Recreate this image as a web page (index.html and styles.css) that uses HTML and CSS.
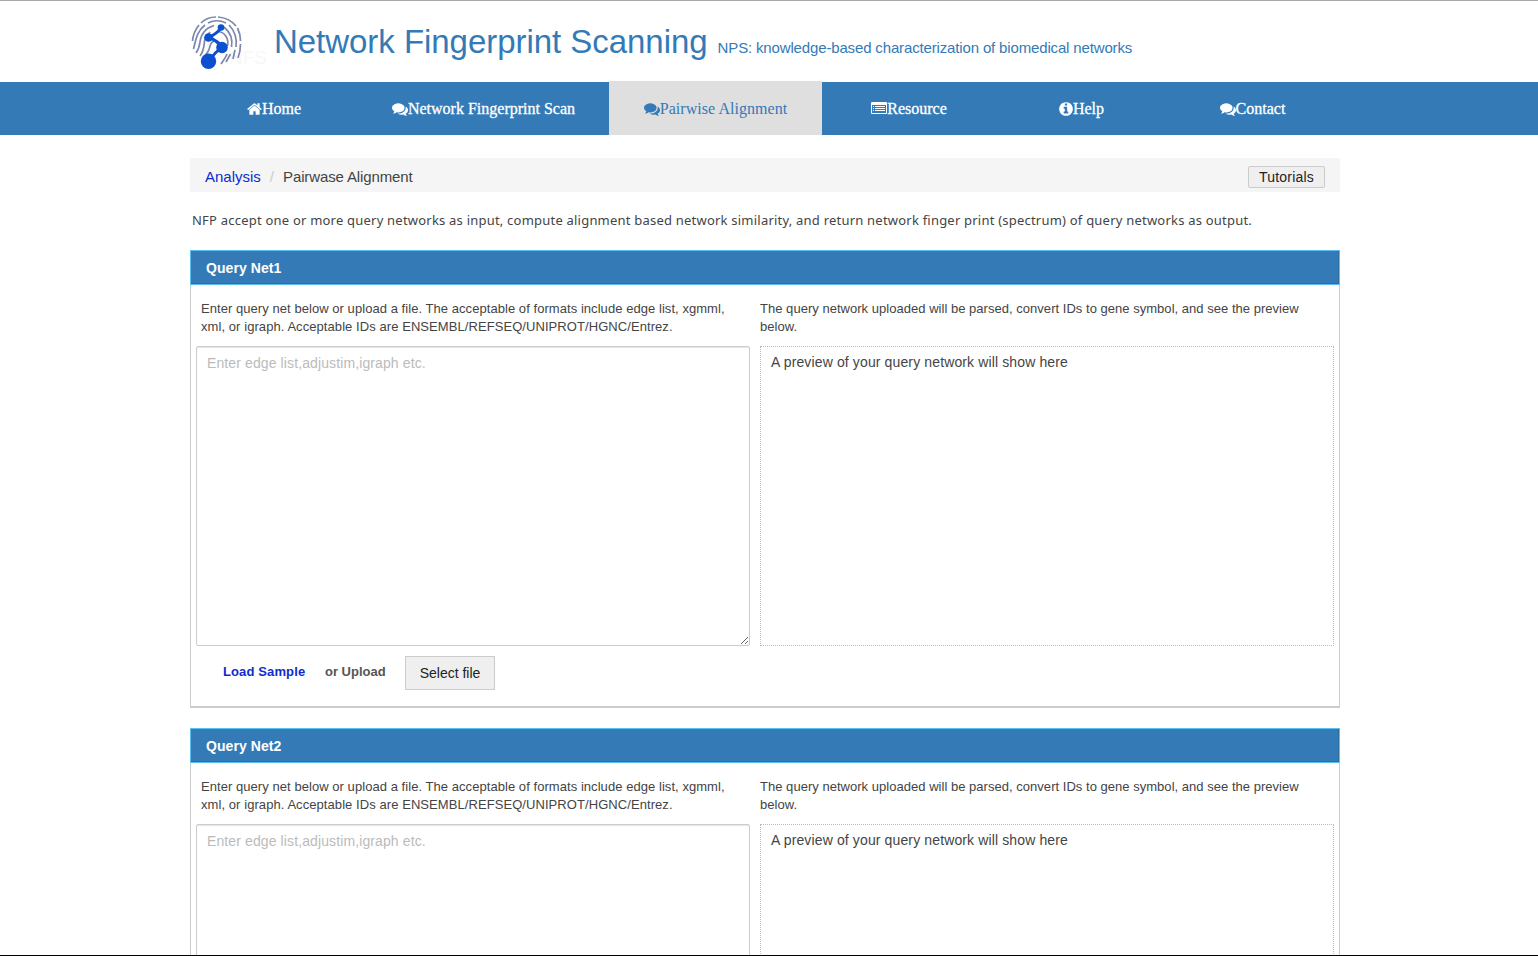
FILE: index.html
```html
<!DOCTYPE html>
<html lang="en">
<head>
<meta charset="utf-8">
<title>Network Fingerprint Scanning</title>
<link rel="stylesheet" href="styles.css">
</head>
<body>
<svg class="sprite" width="0" height="0">
  <symbol id="comments" viewBox="0 0 1792 1792"><path d="M1408 768q0 139-94 257t-256.5 186.5-353.5 68.5q-86 0-176-16-124 88-278 128-36 9-86 16h-3q-11 0-20.5-8t-11.5-21q-1-3-1-6.5t.5-6.5 2-6l2.5-5 3.5-5.5 4-5 4.5-5 4-4.5q5-6 23-25t26-29.5 22.5-29 25-38.5 20.5-44q-124-72-195-177t-71-224q0-139 94-257t256.5-186.5 353.5-68.5 353.5 68.5 256.5 186.5 94 257zm384 256q0 120-71 224.5t-195 176.5q10 24 20.5 44t25 38.5 22.5 29 26 29.5 23 25q1 1 4 4.5t4.5 5 4 5 3.5 5.5l2.5 5 2 6 .5 6.5-1 6.5q-3 14-13 22t-22 7q-50-7-86-16-154-40-278-128-90 16-176 16-271 0-472-132 58 4 88 4 161 0 309-45t264-129q125-92 192-212t67-254q0-77-23-152 129 71 204 178t75 230z"/></symbol>
</svg>
<header class="header">
  <svg class="logo" viewBox="0 0 84 64">
    <text class="logo-text" x="39" y="53">NFS</text>
    <g fill="none" stroke="#7d86ad" stroke-width="1.7">
      <path d="M2.500 30C3 24 5 19 9 14M11 12C15 8 20 6 26 6M28 6C35 6.500 41 9 46 15M47.500 17C49.500 21 50.500 25 50.500 30M50.500 33C50.500 38 49.500 43 48 47"/>
      <path d="M3.500 38C6 28 7 20 15 14M18 12C23 9.500 30 9 36 12M39 14C45 20 47 28 46 36M45 39L43 48"/>
      <path d="M6 42C9 38 9.500 35 10 31C11 23 16 17 24 14.500M34 16C41 22 43 28 41.500 36M40.500 43L36 51"/>
      <path d="M10 45C14 40 14 35 14.500 30C15 27 18 24 20 21M28 20.500C35 21 39 28 37.500 35M37 43C36 46 33 50 31 53"/>
      <path d="M14 46C18 42 19 40 20 35C22 28 30 28 31 36"/>
    </g>
    <path d="M31 16.500Q27 23 18.500 26.500Q26 28 32 37Q24 41 20 50" fill="none" stroke="#0a50cf" stroke-width="3"/>
    <g fill="#0a50cf"><circle cx="31" cy="16.500" r="3.300"/><circle cx="18.500" cy="26.500" r="4.300"/><circle cx="32" cy="36.500" r="5.800"/><circle cx="18.500" cy="50.200" r="7.700"/></g>
  </svg>
  <h1 class="title">Network Fingerprint Scanning</h1>
  <span class="tagline">NPS: knowledge-based characterization of biomedical networks</span>
</header>
<nav class="nav">
  <a class="tab home"><svg class="icon" viewBox="64 0 1664 1792"><path d="M1472 992v480q0 26-19 45t-45 19h-384v-384h-256v384h-384q-26 0-45-19t-19-45v-480q0-1 .5-3t.5-3l575-474 575 474q1 2 1 6zm223-69l-62 74q-8 9-21 11h-3q-13 0-21-7l-692-577-692 577q-12 8-24 7-13-2-21-11l-62-74q-8-10-7-23.500t11-21.500l719-599q32-26 76-26t76 26l244 204v-195q0-14 9-23t23-9h192q14 0 23 9t9 23v408l219 182q10 8 11 21.500t-7 23.500z"/></svg><span>Home</span></a>
  <a class="tab scan"><svg class="icon"><use href="#comments"/></svg><span>Network Fingerprint Scan</span></a>
  <a class="tab active"><svg class="icon"><use href="#comments"/></svg><span>Pairwise Alignment</span></a>
  <a class="tab resource"><svg class="icon" viewBox="0 0 16 16"><path fill-rule="evenodd" d="M1 1h14a1 1 0 0 1 1 1v10a1 1 0 0 1-1 1H1a1 1 0 0 1-1-1V2a1 1 0 0 1 1-1zM1 4v8h14V4zM2 5h1v1H2zM4 5h10v1H4zM2 7h1v1H2zM4 7h10v1H4zM2 9h1v1H2zM4 9h10v1H4z"/></svg><span>Resource</span></a>
  <a class="tab help"><svg class="icon" viewBox="128 0 1536 1792"><path d="M1152 1376v-160q0-14-9-23t-23-9h-96v-512q0-14-9-23t-23-9h-320q-14 0-23 9t-9 23v160q0 14 9 23t23 9h96v320h-96q-14 0-23 9t-9 23v160q0 14 9 23t23 9h448q14 0 23-9t9-23zm-128-896v-160q0-14-9-23t-23-9h-192q-14 0-23 9t-9 23v160q0 14 9 23t23 9h192q14 0 23-9t9-23zm640 416q0 209-103 385.500t-279.500 279.500-385.500 103-385.500-103-279.500-279.500-103-385.500 103-385.500 279.500-279.500 385.500-103 385.500 103 279.500 279.500 103 385.500z"/></svg><span>Help</span></a>
  <a class="tab contact"><svg class="icon"><use href="#comments"/></svg><span>Contact</span></a>
</nav>
<main class="main">
  <div class="breadcrumb"><a class="crumb">Analysis</a><span class="slash">/</span><span class="current">Pairwase Alignment</span><button class="tutorials">Tutorials</button></div>
  <p class="intro">NFP accept one or more query networks as input, compute alignment based network similarity, and return network finger print (spectrum) of query networks as output.</p>
  <section class="panel">
    <h2 class="panel-title">Query Net1</h2>
    <div class="panel-body">
      <div class="left">
        <p class="hint hint-left">Enter query net below or upload a file. The acceptable of formats include edge list, xgmml,<br><span class="hint-ids">xml, or igraph. Acceptable IDs are ENSEMBL/REFSEQ/UNIPROT/HGNC/Entrez.</span></p>
        <textarea class="input" placeholder="Enter edge list,adjustim,igraph etc."></textarea>
      </div>
      <div class="right">
        <p class="hint">The query network uploaded will be parsed, convert IDs to gene symbol, and see the preview<br>below.</p>
        <div class="preview"><span>A preview of your query network will show here</span></div>
      </div>
    </div>
    <div class="actions"><a class="sample">Load Sample</a><span class="upload">or Upload</span><button class="select">Select file</button></div>
  </section>
  <section class="panel">
    <h2 class="panel-title">Query Net2</h2>
    <div class="panel-body">
      <div class="left">
        <p class="hint hint-left">Enter query net below or upload a file. The acceptable of formats include edge list, xgmml,<br><span class="hint-ids">xml, or igraph. Acceptable IDs are ENSEMBL/REFSEQ/UNIPROT/HGNC/Entrez.</span></p>
        <textarea class="input" placeholder="Enter edge list,adjustim,igraph etc."></textarea>
      </div>
      <div class="right">
        <p class="hint">The query network uploaded will be parsed, convert IDs to gene symbol, and see the preview<br>below.</p>
        <div class="preview"><span>A preview of your query network will show here</span></div>
      </div>
    </div>
  </section>
</main>
</body>
</html>
```
FILE: styles.css
```css
* { box-sizing: border-box; }
body { margin: 0; height: 956px; overflow: hidden; border-top: 1px solid #a8a8a8; border-bottom: 1px solid #000; background: #fff; color: #444; font-family: "Liberation Sans", Arial, sans-serif; }
.sprite { display: block; }
.header { display: flex; align-items: baseline; height: 81px; padding: 10px 0 0 190px; color: #337ab7; white-space: nowrap; }
.logo { width: 84px; height: 64px; align-self: flex-start; }
.logo-text { font: 19px "Liberation Sans", sans-serif; fill: #f7f7f9; }
.title { margin: 0 10px 0 0; font-size: 33px; font-weight: 400; line-height: 62px; letter-spacing: -0.04px; }
.tagline { font-size: 15px; letter-spacing: -0.15px; }
.nav { display: flex; height: 53px; padding-left: 190px; background: #337ab7; color: #fff; font: 16px "Liberation Serif", serif; }
.tab { display: flex; align-items: center; justify-content: center; height: 53px; white-space: nowrap; -webkit-text-stroke: 0.3px currentColor; }
.icon { width: 16px; height: 16px; fill: currentColor; stroke: none; }
.home { width: 168px; }
.home .icon { width: 15px; }
.scan { width: 251px; }
.active { width: 213px; height: 54px; margin-top: -1px; padding-top: 2px; background: #dfdfdf; color: #337ab7; letter-spacing: 0.05px; -webkit-text-stroke: 0; }
.resource { width: 174px; }
.help { width: 171px; }
.help .icon { width: 14px; }
.contact { width: 171px; }
.main { width: 1150px; margin: 23px 0 0 190px; }
.breadcrumb { display: flex; align-items: center; height: 34px; padding: 2px 15px 0; background: #f5f5f5; font-size: 15px; }
.crumb { color: #0f2bd0; }
.slash { margin: 0 9px; color: #ccc; }
.current { letter-spacing: -0.12px; }
.tutorials { width: 77px; height: 22px; margin: 2px 0 0 auto; padding: 0; border: 1px solid #ccc; border-radius: 2px; background: #efefef; color: #222; font: 14px "Liberation Sans", sans-serif; letter-spacing: 0.2px; }
.intro { margin: 18px 0 20px 2px; font: 13px/20px "Noto Sans", sans-serif; letter-spacing: 0.215px; white-space: nowrap; }
.panel { height: 458px; margin-bottom: 20px; border: 1px solid #ccc; border-top: 0; border-bottom-width: 2px; }
.panel-title { height: 35px; margin: 0 -1px; padding-left: 15px; border: 1px solid #5bc0ef; background: #337ab7; box-shadow: inset -1px -1px 0 #2e6da4; color: #fff; font-size: 14px; line-height: 34px; letter-spacing: 0.07px; }
.panel-body { display: grid; grid-template-columns: 554px 574px; gap: 10px; padding: 15px 5px 0; }
.hint { margin: 0 0 10px; font-size: 13px; line-height: 18px; letter-spacing: 0.028px; white-space: nowrap; }
.hint-left { padding-left: 5px; letter-spacing: 0.055px; }
.hint-ids { letter-spacing: 0.07px; }
.input { display: block; width: 554px; height: 300px; padding: 8px 10px; border: 1px solid #ccc; border-radius: 2px; box-shadow: inset 0 1px 1px rgba(0,0,0,.1); font: 14px "Liberation Sans", sans-serif; letter-spacing: 0.11px; outline: 0; }
.input::placeholder { color: #bbb; }
.preview { height: 300px; padding: 6px 10px; border: 1px dotted #bbb; font-size: 14px; line-height: 18px; letter-spacing: 0.13px; }
.actions { display: flex; padding: 10px 0 0 32px; font-size: 13px; font-weight: 700; line-height: 31px; }
.sample { width: 102px; color: #0f2bd0; letter-spacing: 0.12px; }
.upload { width: 80px; color: #555; }
.select { width: 90px; height: 34px; padding: 0; border: 1px solid #ccc; background: #efefef; color: #222; font: 14px "Liberation Sans", sans-serif; }
```
